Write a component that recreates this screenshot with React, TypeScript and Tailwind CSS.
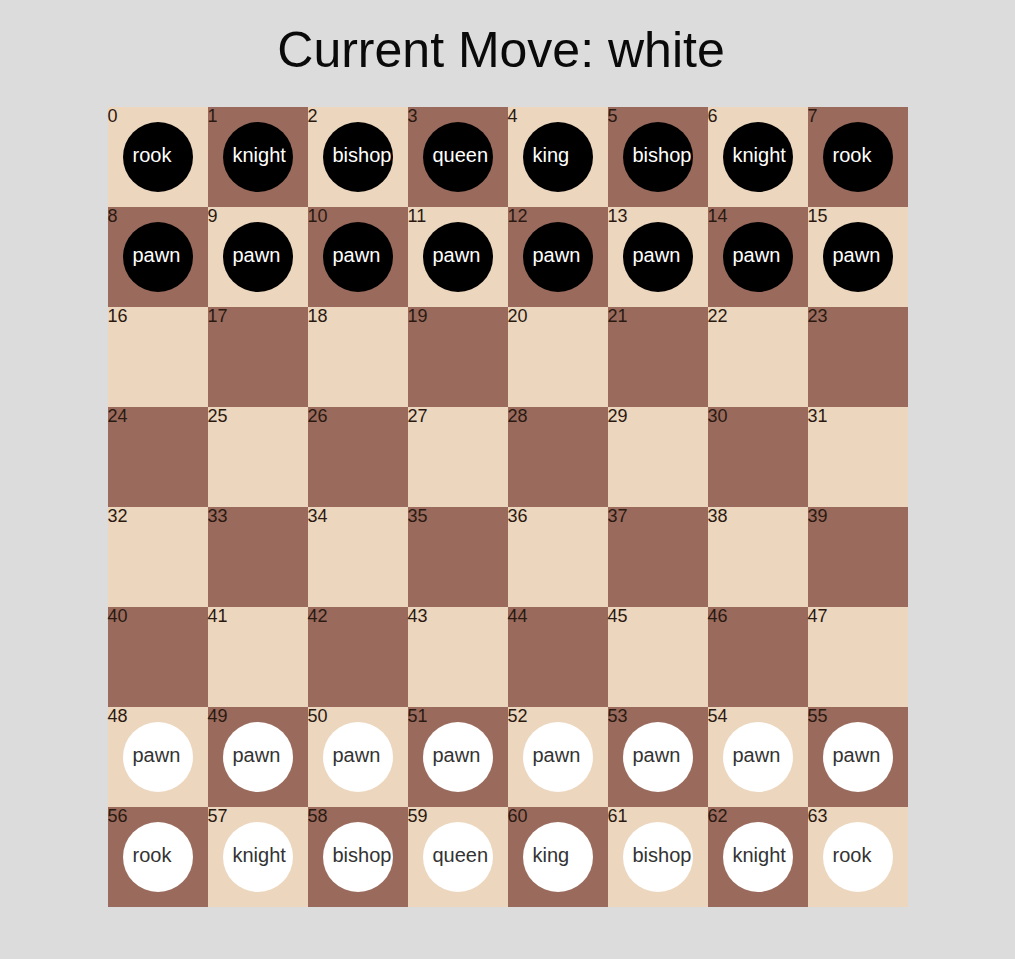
const BACK_ROW = ["rook", "knight", "bishop", "queen", "king", "bishop", "knight", "rook"];

type Piece = { name: string; color: "black" | "white" } | null;

function startingBoard(): Piece[] {
  const squares: Piece[] = Array(64).fill(null);
  for (let i = 0; i < 8; i++) {
    squares[i] = { name: BACK_ROW[i], color: "black" };
    squares[8 + i] = { name: "pawn", color: "black" };
    squares[48 + i] = { name: "pawn", color: "white" };
    squares[56 + i] = { name: BACK_ROW[i], color: "white" };
  }
  return squares;
}

function Square({ index, piece }: { index: number; piece: Piece }) {
  const row = Math.floor(index / 8);
  const col = index % 8;
  const light = (row + col) % 2 === 0;

  return (
    <div
      className={`relative flex h-[100px] w-[100px] items-center justify-center ${
        light ? "bg-[#ecd6bd]" : "bg-[#9a6b5c]"
      }`}
    >
      <span className="absolute left-0 top-0 text-[18px] leading-[18px] text-[#2b1a12]">
        {index}
      </span>
      {piece && (
        <div
          className={`flex h-[70px] w-[70px] items-center overflow-visible whitespace-nowrap rounded-full pb-[4px] pl-[10px] text-[20px] leading-[24px] ${
            piece.color === "black" ? "bg-black text-white" : "bg-white text-[#333]"
          }`}
        >
          {piece.name}
        </div>
      )}
    </div>
  );
}

export default function App() {
  const squares = startingBoard();

  return (
    <div
      className="flex min-h-screen flex-col items-center bg-[#dcdcdc]"
      style={{ fontFamily: '"Liberation Sans", Arial, sans-serif' }}
    >
      <h1 className="mb-[32px] mr-[13px] mt-[25px] text-[50px] font-normal leading-none text-[#0a0a0a]">
        Current Move: white
      </h1>
      <div className="grid w-[800px] grid-cols-8">
        {squares.map((piece, i) => (
          <Square key={i} index={i} piece={piece} />
        ))}
      </div>
    </div>
  );
}
